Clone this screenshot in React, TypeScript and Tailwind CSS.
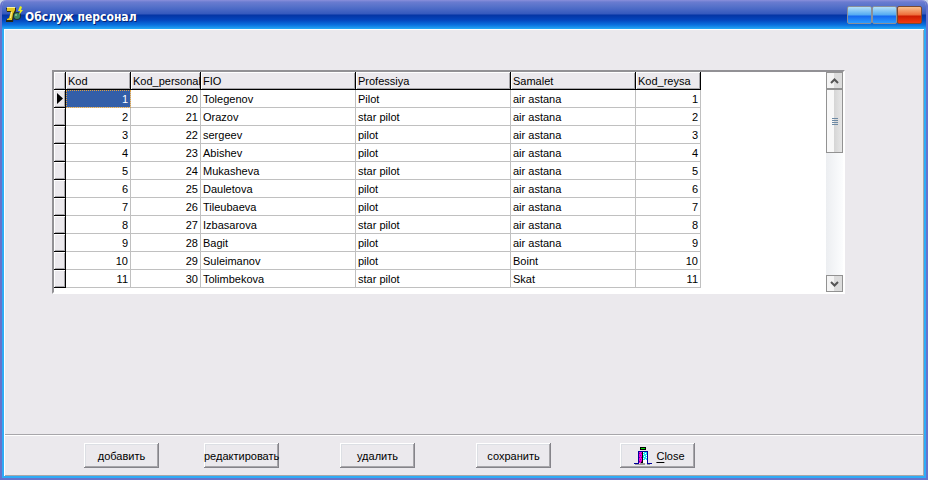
type Row = {
  kod: number
  personal: number
  fio: string
  profession: string
  plane: string
}

const rows: Row[] = [
  { kod: 1, personal: 20, fio: 'Tolegenov', profession: 'Pilot', plane: 'air astana' },
  { kod: 2, personal: 21, fio: 'Orazov', profession: 'star pilot', plane: 'air astana' },
  { kod: 3, personal: 22, fio: 'sergeev', profession: 'pilot', plane: 'air astana' },
  { kod: 4, personal: 23, fio: 'Abishev', profession: 'pilot', plane: 'air astana' },
  { kod: 5, personal: 24, fio: 'Mukasheva', profession: 'star pilot', plane: 'air astana' },
  { kod: 6, personal: 25, fio: 'Dauletova', profession: 'pilot', plane: 'air astana' },
  { kod: 7, personal: 26, fio: 'Tileubaeva', profession: 'pilot', plane: 'air astana' },
  { kod: 8, personal: 27, fio: 'Izbasarova', profession: 'star pilot', plane: 'air astana' },
  { kod: 9, personal: 28, fio: 'Bagit', profession: 'pilot', plane: 'air astana' },
  { kod: 10, personal: 29, fio: 'Suleimanov', profession: 'pilot', plane: 'Boint' },
  { kod: 11, personal: 30, fio: 'Tolimbekova', profession: 'star pilot', plane: 'Skat' },
]

const columns = ['Kod', 'Kod_personal', 'FIO', 'Professiya', 'Samalet', 'Kod_reysa']

const headCell =
  'h-[18px] overflow-hidden border-r border-b border-black bg-[#ebe9ed] p-0 pl-0.5 text-left font-normal whitespace-nowrap shadow-[inset_1px_1px_0_#fff,inset_-1px_-1px_0_#a7a6aa]'
const cell = 'h-[18px] overflow-hidden border-r border-b border-[#c0c0c0] p-0 px-0.5 whitespace-nowrap'
const raised =
  'h-[25px] w-[75px] shrink-0 bg-[#ebe9ed] whitespace-nowrap shadow-[inset_-1px_-1px_0_#85848a,inset_1px_1px_0_#fff,inset_-2px_-2px_0_#a7a6aa,inset_2px_2px_0_#dcdfe4]'

function AppIcon() {
  return (
    <svg width="17" height="17" viewBox="0 0 17 17" className="shrink-0" aria-hidden="true">
      <path d="M0 2h10v3L8 9l-1 7H0v-2l3-2 2-6H1z" fill="#2b2a10" />
      <path d="M1 1h8v3L7 8l-1 6H1v-1l2-1 2-7H1z" fill="#e3c622" />
      <path d="M1 1h8v1H1zM5 6h1l-1 6H4z" fill="#fff59a" />
      <circle cx="11" cy="10" r="4" fill="#22352f" />
      <circle cx="11" cy="10" r="3" fill="#3d8b62" />
      <circle cx="10" cy="9" r="1" fill="#8fc6a0" />
      <path d="M14 0l2 1-1 3h2l-4 5 1-4h-2z" fill="#e6ef1c" />
    </svg>
  )
}

function DoorIcon() {
  return (
    <svg
      width="18"
      height="18"
      viewBox="0 0 18 18"
      shapeRendering="crispEdges"
      className="shrink-0"
      aria-hidden="true"
    >
      <path d="M1 17h5v1H1zM6 16h5v2H6zM13 17h3v1h-3z" fill="#9b9b9b" />
      <path d="M6 0h6v3H6z" fill="#000" />
      <path d="M7 1h4v1H7z" fill="#00e000" />
      <path d="M5 5h3v11H5z" fill="#f000e0" />
      <path d="M9 5h4v11H9z" fill="#19e4f4" />
      <path
        d="M5 6h1v1H5zM7 6h1v1H7zM6 8h1v1H6zM5 10h1v1H5zM7 10h1v1H7zM6 12h1v1H6zM5 14h1v1H5zM7 14h1v1H7z"
        fill="#900090"
      />
      <path
        d="M9 5h1v1H9zM11 6h1v1h-1zM9 7h1v1H9zM12 8h1v1h-1zM10 9h1v1h-1zM12 10h1v1h-1zM9 11h1v1H9zM11 12h1v1h-1zM9 13h4v3H9z"
        fill="#fff"
      />
      <path d="M0 16h4V4h10v12h4v1h-5V5H5v12H0z" fill="#00009c" />
      <path d="M8 5h1v11H7v-1h1z" fill="#000" />
    </svg>
  )
}

function ScrollButton({ down = false }: { down?: boolean }) {
  return (
    <button
      type="button"
      aria-label={down ? 'Scroll down' : 'Scroll up'}
      className="flex h-[17px] w-full items-center justify-center border border-[#929292] bg-linear-to-r from-[#f4f4f4] from-50% to-[#dcdcdc] to-50%"
    >
      <svg width="9" height="6" viewBox="0 0 9 6" fill="none" stroke="#555" strokeWidth="2" aria-hidden="true">
        {down ? <path d="M1 1l3.5 3.5L8 1" /> : <path d="M1 5l3.5-3.5L8 5" />}
      </svg>
    </button>
  )
}

function TitleBar() {
  const glass =
    'h-[18px] w-[25px] rounded-[2px] border border-[#8a8f98] bg-[linear-gradient(#b4e0f8_0,#52aaf2_8px,#1668ee_9px,#2b9cff_16px)]'
  return (
    <header className="flex h-[29px] items-center bg-[linear-gradient(#8a8fdb_0,#6a7cd0_2px,#5370c9_7px,#3458bd_14px,#0434a4_15px,#0446bd_20px,#0a72e0_25px,#27aaf5_29px)] pr-1 pl-1">
      <AppIcon />
      <h1 className="ml-0.5 flex-1 pt-1 font-['DejaVu_Sans_Condensed','DejaVu_Sans',sans-serif] text-[12px] leading-4 font-bold text-white [text-shadow:1px_1px_0_#0a2470]">
        Обслуж персонал
      </h1>
      <div className="flex">
        <button type="button" aria-label="Свернуть" className={glass} />
        <button type="button" aria-label="Развернуть" className={glass} />
        <button
          type="button"
          aria-label="Закрыть"
          className="h-[18px] w-[25px] rounded-[2px] border border-[#7a4a30] bg-[linear-gradient(#f8c08c_0,#ee6c38_8px,#cc1c00_9px,#f03c10_16px)]"
        />
      </div>
    </header>
  )
}

function PersonnelGrid() {
  return (
    <div className="mt-10 mr-[79px] ml-12 flex border-2 border-t-[#929195] border-r-white border-b-white border-l-[#929195] bg-white">
      <div className="min-w-0 flex-1 overflow-hidden pb-1">
        <table className="w-[647px] table-fixed border-separate border-spacing-0">
          <colgroup>
            <col className="w-[12px]" />
            <col className="w-[65px]" />
            <col className="w-[70px]" />
            <col className="w-[155px]" />
            <col className="w-[155px]" />
            <col className="w-[125px]" />
            <col className="w-[65px]" />
          </colgroup>
          <thead>
            <tr>
              <td className={headCell} />
              {columns.map((name) => (
                <th key={name} scope="col" className={headCell}>
                  {name}
                </th>
              ))}
            </tr>
          </thead>
          <tbody>
            {rows.map((row, i) => (
              <tr key={row.kod}>
                <td className={headCell}>
                  {i === 0 && (
                    <svg width="6" height="11" viewBox="0 0 6 11" className="ml-px block" aria-hidden="true">
                      <path d="M0 0l6 5.5L0 11z" />
                    </svg>
                  )}
                </td>
                <td
                  className={
                    i === 0
                      ? `${cell} bg-[#335ea8] text-right text-white outline-1 -outline-offset-1 outline-dotted outline-[#e0a040]`
                      : `${cell} text-right`
                  }
                >
                  {row.kod}
                </td>
                <td className={`${cell} text-right`}>{row.personal}</td>
                <td className={cell}>{row.fio}</td>
                <td className={cell}>{row.profession}</td>
                <td className={cell}>{row.plane}</td>
                <td className={`${cell} text-right`}>{row.kod}</td>
              </tr>
            ))}
          </tbody>
        </table>
      </div>
      <div className="flex w-[17px] flex-col bg-linear-to-r from-[#eceef1] to-[#fcfdfe]">
        <ScrollButton />
        <div className="flex h-16 flex-col items-center justify-center gap-px border border-[#929292] bg-linear-to-r from-[#f8f8f8] from-45% via-[#d6d6d6] via-50% to-[#e6e6e6]">
          <span className="h-px w-1.5 bg-[#6f8ba5]" />
          <span className="h-px w-1.5 bg-[#6f8ba5]" />
          <span className="h-px w-1.5 bg-[#6f8ba5]" />
          <span className="h-px w-1.5 bg-[#6f8ba5]" />
        </div>
        <div className="flex-1" />
        <ScrollButton down />
      </div>
    </div>
  )
}

export default function App() {
  return (
    <div className="min-h-screen bg-[#c9d3ea] font-['Liberation_Sans',Arial,sans-serif] text-[11px] leading-[14px] text-black">
      <div className="flex min-h-screen flex-col overflow-hidden rounded-t-[6px] border-x-2 border-b-2 border-[#6673cc]">
        <TitleBar />
        <main className="flex flex-1 flex-col border-x-2 border-b-2 border-[#2fabf5] bg-[#ebe9ed] shadow-[inset_1px_1px_0_#fff,inset_-1px_-1px_0_#a7a6aa]">
          <div className="flex-1 pt-px">
            <PersonnelGrid />
          </div>
          <footer className="mx-px mb-px flex h-[41px] border-t border-[#a7a6aa] pt-2 pl-[79px] shadow-[inset_0_1px_0_#fff]">
            <button type="button" className={raised}>
              добавить
            </button>
            <button type="button" className={`${raised} ml-[45px]`}>
              редактировать
            </button>
            <button type="button" className={`${raised} ml-[61px]`}>
              удалить
            </button>
            <button type="button" className={`${raised} ml-[61px]`}>
              сохранить
            </button>
            <button type="button" className={`${raised} ml-[69px] flex items-center justify-center gap-1 pl-1`}>
              <DoorIcon />
              <span>
                <span className="underline underline-offset-2">C</span>lose
              </span>
            </button>
          </footer>
        </main>
      </div>
    </div>
  )
}
